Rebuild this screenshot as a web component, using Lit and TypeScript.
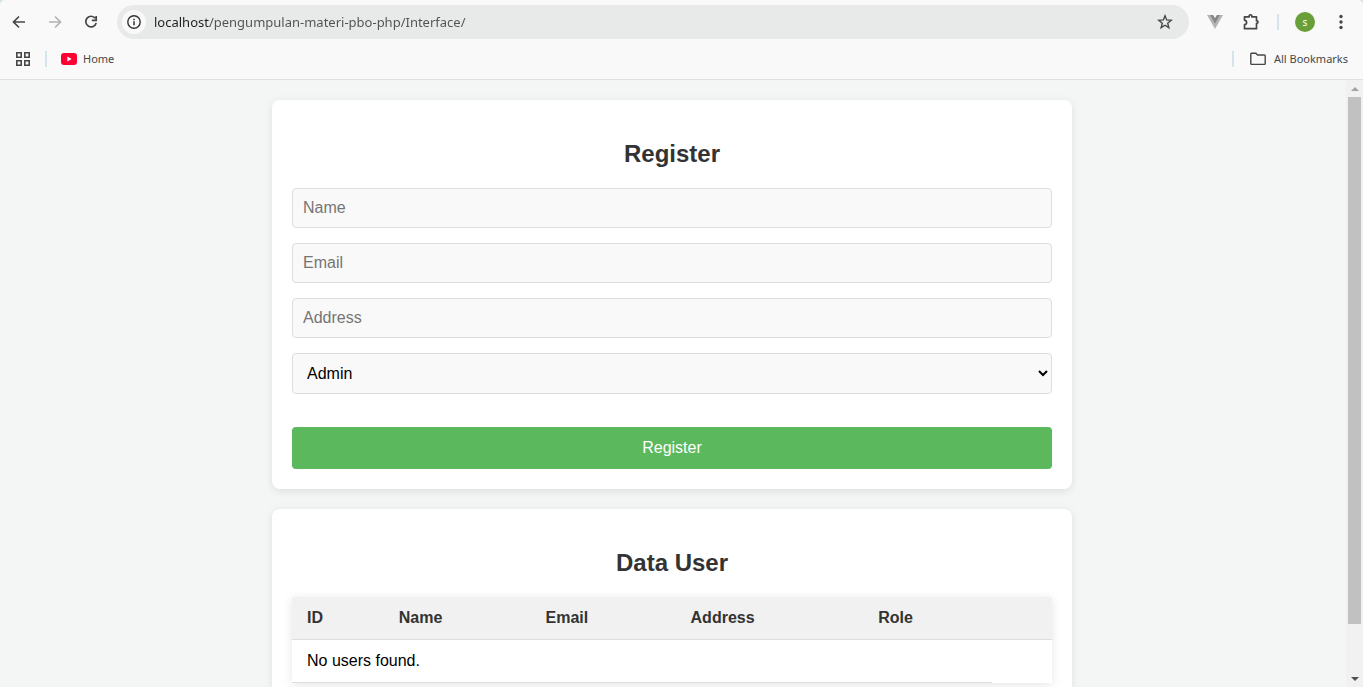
import { LitElement, html, css, svg } from "lit";
import { customElement, property, state } from "lit/decorators.js";

@customElement("browser-bar")
class BrowserBar extends LitElement {
  @property() url = "";

  static styles = css`
    :host {
      display: block;
      flex: none;
      background: #d5e3e6;
      font-family: "Segoe UI", "Noto Sans", "Open Sans", sans-serif;
      color: #474747;
    }
    .frame {
      background: #f9f9f9;
      border-radius: 5px 5px 0 0;
      border-bottom: 1px solid #dfe1e1;
    }
    .toolbar {
      display: flex;
      align-items: center;
      height: 44px;
      padding: 0 4px 0 1px;
    }
    button {
      display: flex;
      align-items: center;
      justify-content: center;
      border: 0;
      padding: 0;
      background: none;
      color: inherit;
      font: inherit;
    }
    .icon {
      width: 36px;
      height: 34px;
      flex: none;
    }
    .forward {
      color: #b1b3b3;
    }
    .omnibox {
      display: flex;
      align-items: center;
      flex: 1;
      height: 34px;
      margin: 0 8px;
      padding: 0 6px 0 5px;
      border-radius: 17px;
      background: #e8eae9;
    }
    .info {
      width: 24px;
      height: 24px;
      flex: none;
      border-radius: 50%;
      background: #f9f9f9;
      color: #333;
    }
    .url {
      flex: 1;
      min-width: 0;
      height: 24px;
      border: 0;
      padding: 0;
      margin-left: 8px;
      outline: 0;
      font: 13px/24px "Segoe UI", "Noto Sans", "Open Sans", sans-serif;
      color: transparent;
      caret-color: #1f1f1f;
      background: linear-gradient(90deg, #1f1f1f 56px, #505252 56px);
      background-clip: text;
      -webkit-background-clip: text;
    }
    .separator {
      width: 2px;
      height: 16px;
      background: #d3e4ea;
      flex: none;
    }
    .toolbar .separator {
      margin: 0 8px;
    }
    .avatar {
      width: 20px;
      height: 20px;
      border-radius: 50%;
      background: #689f38;
      color: #fff;
      font-size: 10px;
      line-height: 20px;
      text-align: center;
    }
    .bookmarks {
      display: flex;
      align-items: center;
      height: 30px;
      padding: 0 15px 5px 15px;
      font-size: 11px;
      line-height: 20px;
    }
    .bookmarks .separator {
      margin: 0 14px;
    }
    .bookmarks .separator:last-of-type {
      margin-right: 16px;
    }
    .bookmark {
      display: flex;
      align-items: center;
      gap: 6px;
      color: inherit;
      text-decoration: none;
    }
    .all {
      gap: 8px;
    }
    .spacer {
      flex: 1;
    }
    svg {
      display: block;
      fill: none;
      stroke: currentColor;
    }
  `;

  private icon(size: number, body: unknown) {
    return html`<svg width=${size} height=${size} viewBox="0 0 ${size} ${size}" aria-hidden="true">${body}</svg>`;
  }

  render() {
    return html`
      <div class="frame">
        <div class="toolbar">
          <button class="icon" aria-label="Back">
            ${this.icon(16, svg`<path d="M14 8H3M8 2.5 2.5 8 8 13.5" stroke-width="1.7"/>`)}
          </button>
          <button class="icon forward" aria-label="Forward">
            ${this.icon(16, svg`<path d="M2 8h11M8 2.5 13.5 8 8 13.5" stroke-width="1.7"/>`)}
          </button>
          <button class="icon" aria-label="Reload">
            ${this.icon(16, svg`<path d="M12.3 4.3A5.3 5.3 0 1 0 13.2 9M13.2 2v4.4H8.8" stroke-width="1.7"/>`)}
          </button>
          <div class="omnibox">
            <button class="info" aria-label="Site information">
              ${this.icon(16, svg`<circle cx="8" cy="8" r="6.2" stroke-width="1.4"/><path d="M8 7.2v4M8 4.7v1.5" stroke-width="1.5"/>`)}
            </button>
            <input class="url" type="text" aria-label="Address bar" spellcheck="false" .value=${this.url} />
            <button class="icon" aria-label="Bookmark this page">
              ${this.icon(16, svg`<path d="m8 1.8 1.65 4.15 4.65.35-3.6 2.95 1.15 4.35L8 11.2l-3.85 2.4L5.3 9.25 1.7 6.3l4.65-.35Z" stroke-width="1.4"/>`)}
            </button>
          </div>
          <button class="icon" aria-label="Vue extension">
            ${this.icon(16, svg`<path d="M0 1h16L8 15Z" fill="#b4b4b4" stroke="none"/><path d="M3.2 1h3L8 4l1.800-3h3L8 9.400Z" fill="#868686" stroke="none"/><path d="M6.200 1h3.600L8 4Z" fill="#f9f9f9" stroke="none"/>`)}
          </button>
          <button class="icon" aria-label="Extensions">
            ${this.icon(18, svg`<path d="M2.500 3.800h4.700V2.800q0-1 1.300-1t1.300 1v1h4.700v4h.300q1.200 0 1.200 1.300t-1.200 1.300h-.300v5.300h-12v-4.100q2.100-.400 2.100-2.200t-2.100-2.200Z" stroke-width="1.700" stroke-linejoin="round"/>`)}
          </button>
          <span class="separator"></span>
          <button class="icon" aria-label="Profile"><span class="avatar">s</span></button>
          <button class="icon" aria-label="Menu">
            ${this.icon(16, svg`<g fill="currentColor" stroke="none"><circle cx="8" cy="2.5" r="1.7"/><circle cx="8" cy="8" r="1.7"/><circle cx="8" cy="13.5" r="1.7"/></g>`)}
          </button>
        </div>
        <nav class="bookmarks" aria-label="Bookmarks">
          <button aria-label="Tab groups">
            ${this.icon(16, svg`<path d="M1.800 1.800h4.400v4.400H1.800ZM9.800 1.800h4.400v4.400H9.800ZM1.800 9.800h4.400v4.400H1.800ZM9.800 9.800h4.400v4.400H9.800Z" stroke-width="1.600"/>`)}
          </button>
          <span class="separator"></span>
          <a class="bookmark" href="#home">
            ${this.icon(16, svg`<rect y="2" width="16" height="12" rx="3" fill="#ff0033" stroke="none"/><path d="M6.4 5.6 10.6 8l-4.2 2.4Z" fill="#fff" stroke="none"/>`)}
            Home
          </a>
          <span class="spacer"></span>
          <span class="separator"></span>
          <button class="bookmark all">
            ${this.icon(16, svg`<path d="M.8 3q0-.8.8-.8h4.2l1.800 1.800h6.800q.8 0 .8.800v7.800q0 .8-.8.800H1.600q-.8 0-.8-.8Z" stroke-width="1.400"/>`)}
            All Bookmarks
          </button>
        </nav>
      </div>
    `;
  }
}

@customElement("page-scrollbar")
class PageScrollbar extends LitElement {
  static styles = css`
    :host {
      display: flex;
      flex-direction: column;
      flex: none;
      width: 17px;
      background: #f1f1f1;
    }
    .arrow {
      display: flex;
      align-items: center;
      justify-content: center;
      height: 17px;
      color: #505050;
    }
    .start {
      color: #a3a3a3;
    }
    .track {
      flex: 1;
      padding: 0 2px;
    }
    .thumb {
      height: 92%;
      background: #c1c1c1;
    }
    svg {
      display: block;
      fill: currentColor;
    }
  `;

  render() {
    return html`
      <div class="arrow start"><svg width="8" height="4"><path d="M0 4 4 0l4 4Z" /></svg></div>
      <div class="track"><div class="thumb"></div></div>
      <div class="arrow"><svg width="8" height="4"><path d="m0 0 4 4 4-4Z" /></svg></div>
    `;
  }
}

@customElement("app-root")
class AppRoot extends LitElement {
  @state() private users: string[][] = [];

  static styles = css`
    :host {
      display: flex;
      flex-direction: column;
      height: 100vh;
      overflow: hidden;
      font: 16px/18px Arial, "Liberation Sans", sans-serif;
    }
    .view {
      display: flex;
      flex: 1;
      min-height: 0;
    }
    .page {
      flex: 1;
      overflow: hidden;
      box-sizing: border-box;
      padding: 20px 22px 20px 20px;
      background: #f4f6f5;
    }
    .stack {
      display: flex;
      flex-direction: column;
      gap: 20px;
      max-width: 800px;
      margin: 0 auto;
    }
    .card {
      padding: 20px;
      border-radius: 8px;
      background: #fff;
      box-shadow: 0 4px 8px rgba(0, 0, 0, 0.05), 0 0 10px rgba(0, 0, 0, 0.05);
    }
    h2 {
      margin: 20px 0;
      font-size: 24px;
      line-height: 28px;
      text-align: center;
      color: #333;
    }
    form {
      display: flex;
      flex-direction: column;
      gap: 15px;
    }
    .field {
      box-sizing: border-box;
      width: 100%;
      height: 40px;
      padding: 10px;
      border: 1px solid #ddd;
      border-radius: 4px;
      background-color: #f9f9f9;
      font: inherit;
    }
    .field::placeholder {
      color: #757575;
    }
    select.field {
      height: 41px;
      color: #000;
    }
    .submit {
      height: 42px;
      margin-top: 18px;
      border: 0;
      border-radius: 4px;
      background: #5cb85c;
      color: #fff;
      font: inherit;
    }
    table {
      width: 100%;
      border-collapse: collapse;
      box-shadow: 0 2px 10px rgba(0, 0, 0, 0.1);
    }
    th,
    td {
      padding: 12px 15px;
      border-bottom: 1px solid #ddd;
      text-align: left;
    }
    th {
      background: #f1f1f1;
      color: #333;
    }
  `;

  render() {
    return html`
      <browser-bar url="localhost/pengumpulan-materi-pbo-php/Interface/"></browser-bar>
      <div class="view">
        <main class="page">
          <div class="stack">
            <section class="card">
              <h2>Register</h2>
              <form @submit=${(e: Event) => e.preventDefault()}>
                <input class="field" type="text" name="name" placeholder="Name" aria-label="Name" />
                <input class="field" type="email" name="email" placeholder="Email" aria-label="Email" />
                <input class="field" type="text" name="address" placeholder="Address" aria-label="Address" />
                <select class="field" name="role" aria-label="Role">
                  <option>Admin</option>
                </select>
                <button class="submit" type="submit">Register</button>
              </form>
            </section>
            <section class="card">
              <h2>Data User</h2>
              <table>
                <thead>
                  <tr>
                    <th>ID</th>
                    <th>Name</th>
                    <th>Email</th>
                    <th>Address</th>
                    <th>Role</th>
                    <th></th>
                  </tr>
                </thead>
                <tbody>
                  ${this.users.length
                    ? this.users.map((user) => html`<tr>${user.map((cell) => html`<td>${cell}</td>`)}</tr>`)
                    : html`<tr><td colspan="5">No users found.</td></tr>`}
                </tbody>
              </table>
            </section>
          </div>
        </main>
        <page-scrollbar></page-scrollbar>
      </div>
    `;
  }
}
